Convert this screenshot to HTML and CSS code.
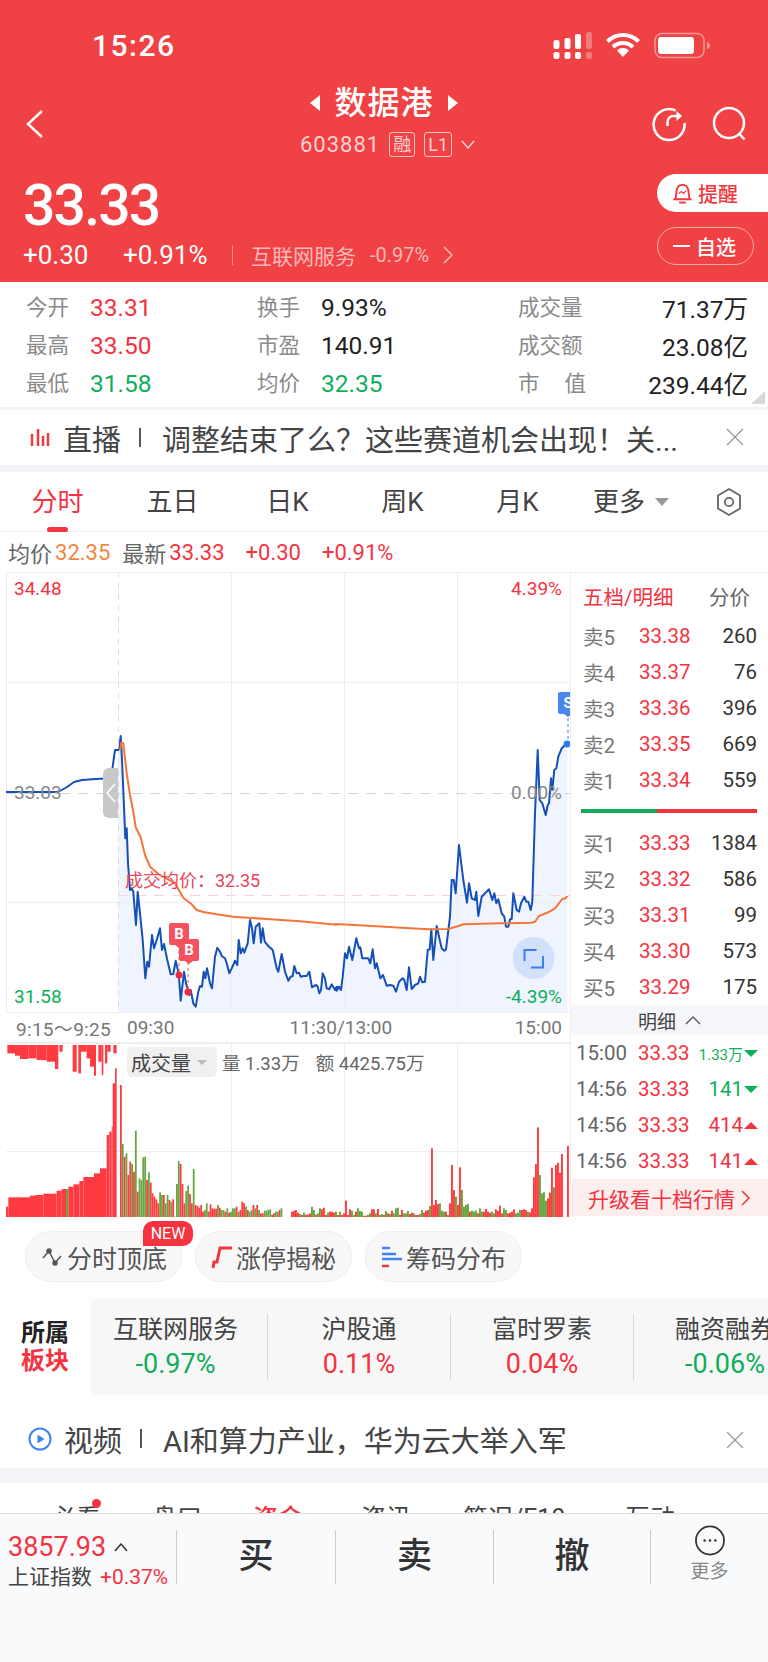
FILE: index.html
```html
<!DOCTYPE html>
<html lang="zh-CN">
<head>
    <meta charset="UTF-8">
    <meta name="viewport" content="width=device-width, initial-scale=1.0">
    <title>数据港 603881</title>
    <link rel="stylesheet" href="styles.css">
</head>
<body>
    <div class="page">
        <header class="top">
            <div class="status">
                <span class="clock">15:26</span>
                <svg class="status-icons" viewBox="550 28 162 34" width="162" height="34">
                    <g fill="#fff">
                        <rect x="553.5" y="40" width="6" height="9" rx="2"/>
                        <rect x="564.5" y="38" width="6" height="11" rx="2"/>
                        <rect x="575" y="34" width="6" height="15" rx="2"/>
                        <rect x="586" y="32" width="6" height="17" rx="2" fill-opacity=".3"/>
                        <rect x="553.5" y="52" width="6" height="7" rx="2"/>
                        <rect x="564.5" y="52" width="6" height="7" rx="2"/>
                        <rect x="575" y="52" width="6" height="7" rx="2"/>
                        <rect x="586" y="52" width="6" height="7" rx="2" fill-opacity=".3"/>
                        <path d="M623 57l-6-6.5a8.5 8.5 0 0 1 12 0z"/>
                    </g>
                    <g fill="none" stroke="#fff" stroke-width="4">
                        <path d="M607.5 41.5a22 22 0 0 1 31 0"/>
                        <path d="M613 47a14.5 14.5 0 0 1 20 0"/>
                    </g>
                    <rect x="655" y="33.500" width="49" height="24" rx="7" fill="none" stroke="#fff" stroke-opacity=".45" stroke-width="1.500"/>
                    <rect x="658" y="37" width="36" height="17" rx="3" fill="#fff"/>
                    <path d="M707 42c2 .5 3 2 3 3.500s-1 3-3 3.500z" fill="#fff" fill-opacity=".5"/>
                </svg>
            </div>
            <nav class="nav">
                <svg class="back" viewBox="0 0 20 32" width="20" height="32"><path d="M17 3L3 16l14 13" fill="none" stroke="#fff" stroke-width="2.500"/></svg>
                <div class="nav-title">
                    <div class="name-row">
                        <span class="arrow-left"></span>
                        <h1>数据港</h1>
                        <span class="arrow-right"></span>
                    </div>
                    <div class="code-row">
                        <span>603881</span>
                        <span class="code-tag">融</span>
                        <span class="code-tag">L1</span>
                        <svg viewBox="0 0 14 9" width="14" height="9"><path d="M1 1l6 7 6-7" fill="none" stroke="#fbd0d0" stroke-width="1.500"/></svg>
                    </div>
                </div>
                <div class="nav-actions">
                    <svg viewBox="0 0 36 36" width="36" height="36" fill="none" stroke="#fff" stroke-width="2.500">
                        <path d="M24.500 4.500A15.500 15.500 0 1 0 33.500 17"/>
                        <path d="M16.500 20v-3.500c0-4 2.500-6.500 6-6.500h7"/>
                        <path d="M25.500 5l5.500 5-5.500 5" fill="#fff" stroke="none"/>
                    </svg>
                    <svg viewBox="0 0 36 36" width="36" height="36" fill="none" stroke="#fff" stroke-width="2.500">
                        <circle cx="17" cy="17" r="15"/>
                        <path d="M27.500 28l5 5.500"/>
                    </svg>
                </div>
            </nav>
            <div class="quote">
                <div class="quote-left">
                    <div class="last-price">33.33</div>
                    <div class="change-row">
                        <span class="change">+0.30</span>
                        <span class="change-pct">+0.91%</span>
                        <i class="change-sep"></i>
                        <span class="sector">互联网服务</span>
                        <span class="sector-pct">-0.97%</span>
                        <svg viewBox="0 0 10 18" width="10" height="18"><path d="M1 1l8 8-8 8" fill="none" stroke="#f9bcbc" stroke-width="1.500"/></svg>
                    </div>
                </div>
                <div class="quote-btns">
                    <div class="btn-remind">
                        <svg viewBox="0 0 22 24" width="21" height="23" fill="none" stroke="#f0383f" stroke-width="2">
                            <path d="M3 18c2-2 1-6 2-10 .8-3 3-5 6-5s5.200 2 6 5c1 4 0 8 2 10z"/>
                            <path d="M7.500 21.500h7"/>
                            <path d="M7 12l3-2 2 2 3-3" stroke-width="1.200"/>
                        </svg>
                        <span>提醒</span>
                    </div>
                    <div class="btn-watch"><i></i><span>自选</span></div>
                </div>
            </div>
        </header>

        <section class="stats">
            <div class="stat"><span class="stat-label">今开</span><span class="red">33.31</span></div>
            <div class="stat"><span class="stat-label">换手</span><span>9.93%</span></div>
            <div class="stat stat-end"><span class="stat-label">成交量</span><span>71.37万</span></div>
            <div class="stat"><span class="stat-label">最高</span><span class="red">33.50</span></div>
            <div class="stat"><span class="stat-label">市盈</span><span>140.91</span></div>
            <div class="stat stat-end"><span class="stat-label">成交额</span><span>23.08亿</span></div>
            <div class="stat"><span class="stat-label">最低</span><span class="green">31.58</span></div>
            <div class="stat"><span class="stat-label">均价</span><span class="green">32.35</span></div>
            <div class="stat stat-end"><span class="stat-label label-wide"><b>市</b><b>值</b></span><span>239.44亿</span></div>
            <i class="stats-corner"></i>
        </section>

        <section class="notice notice-live">
            <svg class="notice-icon" viewBox="0 0 20 20" width="20" height="20"><path d="M2 6v12M8 1v17M13 8v10M18 5v13" stroke="#f0383f" stroke-width="2.500" fill="none"/></svg>
            <span class="notice-kind">直播</span>
            <i class="notice-bar"></i>
            <span class="notice-text">调整结束了么？这些赛道机会出现！关...</span>
            <svg class="notice-close" viewBox="0 0 18 18" width="18" height="18"><path d="M1 1l16 16M17 1L1 17" stroke="#999" stroke-width="1.300"/></svg>
        </section>

        <div class="tabs">
            <span class="tab tab-on">分时</span>
            <span class="tab">五日</span>
            <span class="tab">日K</span>
            <span class="tab">周K</span>
            <span class="tab">月K</span>
            <span class="tab tab-more">更多<i></i></span>
            <svg class="tab-gear" viewBox="0 0 26 30" width="26" height="30" fill="none" stroke="#666" stroke-width="1.800">
                <path d="M13 2l11 6.500v13L13 28 2 21.500v-13z"/>
                <circle cx="13" cy="15" r="4.200"/>
            </svg>
        </div>

        <div class="summary">
            <span class="grey-text">均价</span><span class="orange">32.35</span>
            <span class="grey-text gap-left">最新</span><span class="red">33.33</span>
            <span class="red gap-wide">+0.30</span>
            <span class="red gap-wide">+0.91%</span>
        </div>

        <section class="market">
            <div class="charts">
                <div class="price-chart">
                    <svg class="chart-svg" viewBox="6 572 564 440">
                        <polygon id="priceArea" fill="#eff4fe"/>
                        <g stroke="#eeeeee" stroke-width="1" fill="none">
                            <path d="M6 682.500H570M6 902.500H570M231.500 572V1012M344.500 572V1012M457.500 572V1012"/>
                        </g>
                        <path d="M118.500 572V1012" stroke="#dddddd" stroke-dasharray="6 5"/>
                        <path d="M6 793.500H570" stroke="#c9d8e8" stroke-dasharray="10 8"/>
                        <path d="M118 895.500H570" stroke="#fbd3d6" stroke-dasharray="10 8"/>
                        <polyline id="priceLine" fill="none" stroke="#1450b8" stroke-width="2" stroke-linejoin="round"/>
                        <polyline id="avgLine" fill="none" stroke="#f6763a" stroke-width="2" stroke-linejoin="round"/>
                        <path d="M179 945V975M188 962V992" stroke="#f0525e" stroke-dasharray="3 3"/>
                        <path d="M568 712V744" stroke="#3f82f2" stroke-dasharray="3 3"/>
                        <circle cx="179" cy="975" r="3.500" fill="#f5293a"/>
                        <circle cx="188" cy="992" r="3.500" fill="#f5293a"/>
                        <circle cx="567" cy="744" r="3.500" fill="#2f7bf5"/>
                        <circle cx="533.500" cy="958" r="21" fill="#d2e1fb"/>
                        <path d="M524.500 961V950H536.500M543 956V967.500H531" fill="none" stroke="#3c7df0" stroke-width="2"/>
                    </svg>
                    <span class="axis-label axis-tl red">34.48</span>
                    <span class="axis-label axis-tr red">4.39%</span>
                    <span class="axis-label axis-ml">33.03</span>
                    <span class="axis-label axis-mr">0.00%</span>
                    <span class="axis-label axis-bl green">31.58</span>
                    <span class="axis-label axis-br green">-4.39%</span>
                    <span class="avg-tag">成交均价：32.35</span>
                    <span class="trade-mark mark-b1">B</span>
                    <span class="trade-mark mark-b2">B</span>
                    <span class="trade-mark mark-s">S</span>
                    <span class="chart-handle">
                        <svg viewBox="0 0 10 20" width="10" height="20"><path d="M9 1L1 10l8 9" fill="none" stroke="#fff" stroke-width="1.500"/></svg>
                    </span>
                </div>
                <div class="time-axis">
                    <span class="time-pre">9:15～9:25</span>
                    <span>09:30</span>
                    <span class="time-mid">11:30/13:00</span>
                    <span>15:00</span>
                </div>
                <div class="volume-chart">
                    <svg class="chart-svg" viewBox="6 1044 564 173">
                        <g stroke="#eeeeee" stroke-width="1" fill="none">
                            <path d="M6 1151.500H570M231.500 1044V1217M344.500 1044V1217M457.500 1044V1217"/>
                        </g>
                        <g id="volumeBars"></g>
                    </svg>
                    <div class="volume-info">
                        <span class="volume-tag">成交量<i></i></span>
                        <span>量 1.33万</span>
                        <span class="volume-amount">额 4425.75万</span>
                    </div>
                </div>
            </div>

            <aside class="book">
                <div class="book-head"><span class="red">五档/明细</span><span class="grey-text">分价</span></div>
                <div class="book-row"><span class="book-side">卖5</span><span class="red">33.38</span><span>260</span></div>
                <div class="book-row"><span class="book-side">卖4</span><span class="red">33.37</span><span>76</span></div>
                <div class="book-row"><span class="book-side">卖3</span><span class="red">33.36</span><span>396</span></div>
                <div class="book-row"><span class="book-side">卖2</span><span class="red">33.35</span><span>669</span></div>
                <div class="book-row"><span class="book-side">卖1</span><span class="red">33.34</span><span>559</span></div>
                <div class="book-ratio"><i></i></div>
                <div class="book-row"><span class="book-side">买1</span><span class="red">33.33</span><span>1384</span></div>
                <div class="book-row"><span class="book-side">买2</span><span class="red">33.32</span><span>586</span></div>
                <div class="book-row"><span class="book-side">买3</span><span class="red">33.31</span><span>99</span></div>
                <div class="book-row"><span class="book-side">买4</span><span class="red">33.30</span><span>573</span></div>
                <div class="book-row"><span class="book-side">买5</span><span class="red">33.29</span><span>175</span></div>
                <div class="book-band">明细
                    <svg viewBox="0 0 16 9" width="16" height="9"><path d="M1 8l7-7 7 7" fill="none" stroke="#555" stroke-width="1.300"/></svg>
                </div>
                <div class="tick-row"><span class="tick-time">15:00</span><span class="red">33.33</span><span class="tick-qty green tick-small">1.33万<i class="tri-down"></i></span></div>
                <div class="tick-row"><span class="tick-time">14:56</span><span class="red">33.33</span><span class="tick-qty green">141<i class="tri-down"></i></span></div>
                <div class="tick-row"><span class="tick-time">14:56</span><span class="red">33.33</span><span class="tick-qty red">414<i class="tri-up"></i></span></div>
                <div class="tick-row"><span class="tick-time">14:56</span><span class="red">33.33</span><span class="tick-qty red">141<i class="tri-up"></i></span></div>
                <div class="book-upgrade">升级看十档行情
                    <svg viewBox="0 0 10 16" width="10" height="16"><path d="M1 1l7 7-7 7" fill="none" stroke="#f0383f" stroke-width="1.500"/></svg>
                </div>
            </aside>
        </section>

        <div class="tools">
            <div class="tool">
                <svg viewBox="0 0 24 20" width="24" height="20" fill="none" stroke="#555" stroke-width="1.500">
                    <path d="M3 11l6-7 6 12 6-7"/>
                    <circle cx="9" cy="4" r="2" fill="#555"/><circle cx="15" cy="16" r="2" fill="#555"/>
                </svg>
                <span>分时顶底</span>
                <em class="tool-new">NEW</em>
            </div>
            <div class="tool">
                <svg viewBox="0 0 22 26" width="22" height="26" fill="none" stroke="#f0383f" stroke-width="3">
                    <path d="M2 24l1-6h3l3-14h12"/>
                </svg>
                <span>涨停揭秘</span>
            </div>
            <div class="tool">
                <svg viewBox="0 0 22 24" width="22" height="24" fill="none" stroke-width="2.500">
                    <path d="M1 3h8M1 9h14" stroke="#3f82f2"/>
                    <path d="M1 14h20" stroke="#3f82f2"/>
                    <path d="M1 21h7" stroke="#f0383f"/>
                </svg>
                <span>筹码分布</span>
            </div>
        </div>

        <section class="sectors">
            <div class="sectors-title"><b>所属</b><b class="red">板块</b></div>
            <div class="sectors-list">
                <div class="sector-item"><span>互联网服务</span><span class="green sector-num">-0.97%</span></div>
                <div class="sector-item"><span>沪股通</span><span class="red sector-num">0.11%</span></div>
                <div class="sector-item"><span>富时罗素</span><span class="red sector-num">0.04%</span></div>
                <div class="sector-item"><span>融资融券</span><span class="green sector-num">-0.06%</span></div>
            </div>
        </section>

        <section class="notice notice-video">
            <svg class="notice-icon" viewBox="0 0 24 24" width="24" height="24">
                <circle cx="12" cy="12" r="10.500" fill="none" stroke="#3f82f2" stroke-width="2"/>
                <path d="M9.500 7.500l7 4.500-7 4.500z" fill="#3f82f2"/>
            </svg>
            <span class="notice-kind">视频</span>
            <i class="notice-bar"></i>
            <span class="notice-text">AI和算力产业，华为云大举入军</span>
            <svg class="notice-close" viewBox="0 0 18 18" width="18" height="18"><path d="M1 1l16 16M17 1L1 17" stroke="#999" stroke-width="1.300"/></svg>
        </section>

        <div class="lower-tabs">
            <span class="lower-tab tab-watch">必看</span>
            <span class="lower-tab tab-depth">盘口</span>
            <span class="lower-tab tab-money">资金</span>
            <span class="lower-tab tab-news">资讯</span>
            <span class="lower-tab tab-f10">简况/F10</span>
            <span class="lower-tab tab-talk">互动</span>
        </div>

        <footer class="dock">
            <div class="dock-index">
                <div class="index-price">3857.93
                    <svg viewBox="0 0 14 9" width="14" height="9"><path d="M1 8l6-7 6 7" fill="none" stroke="#333" stroke-width="1.500"/></svg>
                </div>
                <div class="index-name">上证指数<span class="red">+0.37%</span></div>
            </div>
            <div class="dock-btn">买</div>
            <div class="dock-btn">卖</div>
            <div class="dock-btn">撤</div>
            <div class="dock-more">
                <svg viewBox="0 0 32 32" width="32" height="32" fill="#333">
                    <circle cx="16" cy="16" r="14.500" fill="none" stroke="#333" stroke-width="1.800"/>
                    <circle cx="10.500" cy="16" r="1.300"/><circle cx="16" cy="16" r="1.300"/><circle cx="21.500" cy="16" r="1.300"/>
                </svg>
                <span>更多</span>
            </div>
        </footer>
    </div>
    <script src="chart.js"></script>
</body>
</html>
```

FILE: styles.css
```css
* {
    box-sizing: border-box;
}
html, body {
    margin: 0;
    padding: 0;
}
body {
    font-family: Roboto, "Noto Sans CJK SC", sans-serif;
    background-color: #fff;
    color: #222;
}
i, em {
    font-style: normal;
}
.page {
    width: 768px;
    height: 1662px;
    overflow: hidden;
    position: relative;
}
.red {
    color: #f5323f;
}
.green {
    color: #0fae5a;
}
.orange {
    color: #f0853e;
}
.grey-text {
    color: #666;
}

/* header */
.top {
    height: 282px;
    background-color: #f04144;
    color: #fff;
}
.status {
    height: 84px;
    padding: 30px 0 0 92px;
    display: flex;
    justify-content: space-between;
    position: relative;
}
.clock {
    font-size: 30px;
    line-height: 32px;
    font-weight: 500;
    letter-spacing: 1.5px;
}
.status-icons {
    position: absolute;
    left: 550px;
    top: 28px;
}
.nav {
    height: 76px;
    display: grid;
    grid-template-columns: 200px 1fr 200px;
    align-items: end;
}
.back {
    margin: 0 0 20px 25px;
}
.nav-title {
    display: flex;
    flex-direction: column;
    align-items: center;
}
.name-row {
    height: 36px;
    display: flex;
    align-items: center;
    gap: 14px;
    margin-top: 1px;
}
.name-row h1 {
    margin: 0;
    font-size: 32px;
    line-height: 36px;
    font-weight: 500;
    letter-spacing: 1px;
}
.arrow-left, .arrow-right {
    width: 0;
    height: 0;
    border-top: 8px solid transparent;
    border-bottom: 8px solid transparent;
}
.arrow-left {
    border-right: 10px solid #fff;
}
.arrow-right {
    border-left: 10px solid #fff;
}
.code-row {
    height: 39px;
    display: flex;
    align-items: center;
    gap: 9px;
    padding: 8px 0 0 7px;
    font-size: 22px;
    color: #fbd0d0;
    letter-spacing: 1px;
}
.code-tag {
    height: 25px;
    min-width: 26px;
    padding: 0 3px;
    border: 1px solid #fbc4c4;
    border-radius: 3px;
    font-size: 18px;
    line-height: 23px;
    text-align: center;
    letter-spacing: 0;
}
.nav-actions {
    display: flex;
    justify-content: flex-end;
    gap: 25px;
    padding: 0 20px 18px 0;
}
.quote {
    display: flex;
    justify-content: space-between;
}
.quote-left {
    padding: 16px 0 0 23px;
}
.last-price {
    height: 64px;
    font-size: 57px;
    line-height: 60px;
    font-weight: 500;
    letter-spacing: -1.8px;
}
.change-row {
    height: 30px;
    display: flex;
    align-items: center;
}
.change {
    font-size: 26px;
    width: 100px;
}
.change-pct {
    font-size: 26px;
    width: 109px;
}
.change-sep {
    width: 1px;
    height: 20px;
    background-color: #f88;
    margin-right: 18px;
}
.sector {
    width: 119px;
    font-size: 21px;
    color: #fab8b8;
}
.sector-pct {
    width: 73px;
    font-size: 20px;
    color: #fab8b8;
}
.quote-btns {
    width: 111px;
    padding-top: 14px;
    display: flex;
    flex-direction: column;
    gap: 15px;
}
.btn-remind {
    height: 38px;
    background-color: #fff;
    color: #f0383f;
    border-radius: 19px 0 0 19px;
    display: flex;
    align-items: center;
    padding-left: 15px;
    gap: 5px;
    font-size: 20px;
    font-weight: 500;
}
.btn-watch {
    width: 97px;
    height: 38px;
    border: 1px solid #f9a9a9;
    border-radius: 19px;
    display: flex;
    align-items: center;
    padding-left: 15px;
    gap: 6px;
    font-size: 20px;
    font-weight: 500;
}
.btn-watch i {
    width: 17px;
    height: 2px;
    background-color: #fff;
}

/* stats */
.stats {
    height: 128px;
    padding: 6px 20px 0 26px;
    border-bottom: 3px solid #f3f4f8;
    display: grid;
    grid-template-columns: 231px 261px 1fr;
    grid-auto-rows: 38px;
    position: relative;
    font-size: 24.5px;
}
.stat {
    display: flex;
    align-items: center;
    gap: 21px;
}
.stat-end {
    justify-content: space-between;
}
.stat-label {
    font-size: 21.5px;
    color: #8a8a8a;
    margin-top: -4px;
}
.label-wide {
    width: 68px;
    display: flex;
    justify-content: space-between;
}
.label-wide b {
    font-weight: 400;
}
.stats-corner {
    position: absolute;
    right: 3px;
    bottom: 3px;
    width: 0;
    height: 0;
    border-left: 14px solid transparent;
    border-bottom: 13px solid #d8d8d8;
}

/* notices */
.notice {
    display: flex;
    align-items: center;
    color: #444;
    font-size: 29px;
    position: relative;
}
.notice-live {
    height: 62px;
    padding-left: 30px;
    border-bottom: 7px solid #f3f4f8;
}
.notice-icon {
    flex: none;
}
.notice-kind {
    margin-left: 13px;
}
.notice-bar {
    width: 2px;
    height: 19px;
    background-color: #555;
    margin: 0 21px 0 18px;
}
.notice-close {
    position: absolute;
    right: 24px;
}
.notice-live .notice-close {
    top: 18px;
}

/* tabs */
.tabs {
    height: 60px;
    display: grid;
    grid-template-columns: repeat(6, 115px) 1fr;
    align-items: center;
    border-bottom: 1px solid #eee;
    font-size: 26px;
    color: #444;
    position: relative;
}
.tab {
    text-align: center;
    position: relative;
    line-height: 60px;
}
.tab-on {
    color: #f5323f;
}
.tab-on::after {
    content: "";
    position: absolute;
    left: 47px;
    bottom: 0;
    width: 21px;
    height: 5px;
    border-radius: 3px;
    background-color: #f5323f;
}
.tab-more {
    display: flex;
    align-items: center;
    padding-left: 18px;
    gap: 10px;
}
.tab-more i {
    width: 0;
    height: 0;
    border-left: 7px solid transparent;
    border-right: 7px solid transparent;
    border-top: 8px solid #999;
}
.tab-gear {
    justify-self: center;
}
.summary {
    height: 40px;
    padding-left: 8px;
    display: flex;
    align-items: center;
    font-size: 22px;
    gap: 3px;
}
.gap-left {
    margin-left: 9px;
}
.gap-wide {
    margin-left: 18px;
}

/* charts */
.market {
    height: 645px;
    padding-left: 6px;
    display: flex;
}
.charts {
    width: 564px;
    border-left: 0;
}
.price-chart {
    height: 440px;
    position: relative;
    overflow: hidden;
    border-top: 1px solid #eee;
    box-shadow: inset 1px 0 #eee;
}
.chart-svg {
    position: absolute;
    left: 0;
    top: 0;
    width: 564px;
    height: 100%;
}
.price-chart .chart-svg {
    top: -1px;
    height: 440px;
}
.axis-label {
    position: absolute;
    font-size: 19px;
    line-height: 22px;
}
.axis-tl { left: 8px; top: 5px; }
.axis-tr { right: 8px; top: 5px; }
.axis-ml { left: 8px; top: 209px; color: #888; }
.axis-mr { right: 8px; top: 209px; color: #888; }
.axis-bl { left: 8px; top: 413px; }
.axis-br { right: 8px; top: 413px; }
.avg-tag {
    position: absolute;
    left: 119px;
    top: 296px;
    font-size: 18px;
    line-height: 24px;
    color: #e5485a;
}
.trade-mark {
    position: absolute;
    width: 20px;
    height: 22px;
    background-color: #f4525f;
    color: #fff;
    border-radius: 2px;
    font-size: 15px;
    font-weight: 700;
    line-height: 22px;
    text-align: center;
}
.trade-mark::after {
    content: "";
    position: absolute;
    left: 6px;
    bottom: -3px;
    width: 0;
    height: 0;
    border-left: 4px solid transparent;
    border-right: 4px solid transparent;
    border-top: 3px solid #f4525f;
}
.mark-b1 { left: 163px; top: 350px; }
.mark-b2 { left: 173px; top: 366px; }
.mark-s {
    left: 552px;
    top: 119px;
    background-color: #4a86f0;
}
.mark-s::after {
    border-top-color: #4a86f0;
}
.chart-handle {
    position: absolute;
    left: 97px;
    top: 195px;
    width: 15px;
    height: 50px;
    background-color: #c8c8c8;
    border-radius: 6px 0 0 6px;
    display: flex;
    align-items: center;
    justify-content: center;
}
.time-axis {
    height: 32px;
    padding: 0 8px 0 10px;
    display: grid;
    grid-template-columns: 111px 110px 1fr auto;
    align-items: center;
    border-top: 1px solid #eee;
    border-bottom: 2px solid #eee;
    font-size: 19px;
    color: #777;
    box-shadow: inset -4px 0 0 #fff;
}
.time-mid {
    text-align: center;
    padding-right: 70px;
}
.time-pre {
    white-space: nowrap;
    letter-spacing: .3px;
}
.volume-chart {
    height: 173px;
    position: relative;
}
.volume-info {
    position: absolute;
    left: 121px;
    top: 3px;
    display: flex;
    align-items: center;
    font-size: 18.5px;
    color: #666;
    gap: 5px;
}
.volume-tag {
    width: 90px;
    height: 30px;
    background-color: #f0f0f0;
    border-radius: 5px;
    display: flex;
    align-items: center;
    padding-left: 4px;
    gap: 6px;
    font-size: 20px;
    color: #444;
}
.volume-tag i {
    width: 0;
    height: 0;
    border-left: 5px solid transparent;
    border-right: 5px solid transparent;
    border-top: 5px solid #bbb;
}
.volume-amount {
    margin-left: 11px;
}

/* order book */
.book {
    width: 198px;
    border-left: 1px solid #eee;
    border-top: 1px solid #eee;
    font-size: 20.5px;
}
.book-head {
    height: 45px;
    padding: 0 18px 0 12px;
    display: flex;
    justify-content: space-between;
    align-items: center;
    font-size: 20.5px;
}
.book-row, .tick-row {
    height: 36px;
    display: grid;
    align-items: center;
    color: #333;
}
.book-row {
    grid-template-columns: 56px 68px 50px;
    padding-left: 12px;
}
.book-row span:last-child {
    text-align: right;
}
.book-side {
    color: #777;
}
.book-ratio {
    height: 9px;
    margin: 8px 11px 10px 10px;
    padding-top: 0;
    display: flex;
    align-items: center;
    background: linear-gradient(#f5323f, #f5323f) center / 100% 4px no-repeat;
    border-radius: 2px;
}
.book-ratio i {
    width: 76px;
    height: 4px;
    background-color: #0fae5a;
    border-radius: 2px 0 0 2px;
}
.book-band {
    height: 30px;
    background-color: #f5f6f9;
    display: flex;
    align-items: center;
    justify-content: center;
    gap: 9px;
    font-size: 19px;
    color: #444;
}
.tick-row {
    grid-template-columns: 62px 54px 1fr;
    padding: 0 10px 0 5px;
}
.tick-time {
    color: #666;
    white-space: nowrap;
}
.tick-qty {
    display: flex;
    align-items: center;
    justify-content: flex-end;
    gap: 1px;
}
.tick-small {
    font-size: 15px;
}
.tri-down, .tri-up {
    width: 0;
    height: 0;
    border-left: 7px solid transparent;
    border-right: 7px solid transparent;
}
.tri-down {
    border-top: 7px solid #0fae5a;
}
.tri-up {
    border-bottom: 7px solid #f5323f;
}
.book-upgrade {
    height: 37px;
    background-color: #fdeeee;
    color: #f5323f;
    display: flex;
    align-items: center;
    justify-content: center;
    gap: 6px;
    font-size: 21px;
}

/* tool pills */
.tools {
    height: 81px;
    padding: 14px 0 0 25px;
    display: flex;
    gap: 13px;
}
.tool {
    width: 157px;
    height: 51px;
    border: 1px solid #eee;
    border-radius: 26px;
    background-color: #f8f8f8;
    display: flex;
    align-items: center;
    justify-content: center;
    gap: 3px;
    font-size: 25px;
    color: #555;
    position: relative;
}
.tool-new {
    position: absolute;
    left: 117px;
    top: -11px;
    width: 50px;
    height: 25px;
    background-color: #f5323f;
    color: #fff;
    border-radius: 10px 10px 10px 0;
    font-size: 16px;
    line-height: 25px;
    text-align: center;
}

/* sectors */
.sectors {
    height: 97px;
    display: flex;
}
.sectors-title {
    width: 90px;
    display: flex;
    flex-direction: column;
    justify-content: center;
    padding-left: 21px;
    font-size: 24px;
    line-height: 28px;
}
.sectors-list {
    flex: 1;
    background-color: #f7f7f7;
    border-radius: 8px 0 0 8px;
    display: grid;
    grid-template-columns: 178px 183px 183px 1fr;
    align-items: center;
    overflow: hidden;
}
.sector-item {
    height: 66px;
    display: flex;
    flex-direction: column;
    align-items: center;
    justify-content: space-between;
    border-right: 1px solid #d8d8d8;
    font-size: 25px;
    line-height: 32px;
    color: #444;
    white-space: nowrap;
}
.sector-item:first-child {
    padding-right: 6px;
}
.sector-item:last-child {
    border-right: 0;
    width: 100px;
    margin-left: 41px;
}
.sector-num {
    font-size: 27px;
}

.notice-video {
    height: 73px;
    padding: 14px 0 0 28px;
}
.notice-video .notice-kind {
    margin-left: 12px;
}
.notice-video .notice-close {
    top: 36px;
}

/* tabs clipped by the dock */
.lower-tabs {
    height: 45px;
    margin-top: 0;
    border-top: 15px solid #f3f4f8;
    position: relative;
    overflow: hidden;
    font-size: 25px;
    color: #444;
}
.lower-tab {
    position: absolute;
    top: 21px;
    line-height: 30px;
    white-space: nowrap;
}
.tab-watch { left: 51px; }
.tab-watch::after {
    content: "";
    position: absolute;
    left: 41px;
    top: -5px;
    width: 9px;
    height: 9px;
    border-radius: 50%;
    background-color: #f5323f;
}
.tab-depth { left: 152px; }
.tab-money { left: 253px; color: #f5323f; font-weight: 500; }
.tab-news { left: 361px; }
.tab-f10 { left: 463px; }
.tab-talk { left: 625px; }

/* bottom dock */
.dock {
    height: 149px;
    background-color: #f9fafc;
    border-top: 1px solid #ddd;
    padding-top: 16px;
    display: grid;
    grid-template-columns: 176px 159px 158px 157px 1fr;
    align-items: start;
}
.dock-index {
    height: 54px;
    padding-left: 8px;
    white-space: nowrap;
}
.index-price {
    display: flex;
    align-items: center;
    gap: 8px;
    font-size: 27px;
    line-height: 34px;
    color: #f5323f;
}
.index-name {
    display: flex;
    gap: 8px;
    font-size: 21px;
    line-height: 26px;
    color: #444;
}
.dock-btn {
    height: 54px;
    border-left: 1px solid #ccc;
    text-align: center;
    font-size: 35px;
    line-height: 54px;
    font-weight: 500;
    color: #333;
}
.dock-more {
    height: 54px;
    border-left: 1px solid #ccc;
    display: flex;
    flex-direction: column;
    align-items: center;
    font-size: 19px;
    line-height: 24px;
    color: #888;
    margin-top: 0;
}
.dock-more svg {
    margin-top: -5px;
    margin-bottom: 4px;
}
```

FILE: chart.js
```js
// crops of the intraday line, read off at 3x
const lineLeft = [[0,176],[10,176],[18,163],[33,158],[38,140],[45,90],[55,90],[58,88],[62,48],[66,120],[72,260],[76,355],[80,325],[84,430],[90,510],[95,505],[100,515],[108,615],[113,515],[120,580],[128,660],[136,775],[142,725],[147,740],[156,645],[162,685],[170,660],[180,625],[186,690],[192,672],[202,720],[212,763],[220,762],[227,722],[236,760],[242,842],[252,755],[258,790],[268,825],[272,810],[280,850],[287,860],[295,815],[300,798],[306,800],[311,755],[316,775],[321,745],[330,790],[336,805],[345,710],[352,683],[360,695],[365,708],[375,715],[380,730],[388,760],[400,735],[405,722],[412,735],[416,660],[422,700],[428,685],[433,698],[443,670],[450,600],[456,625],[461,670],[467,620],[478,610],[483,668],[488,625],[494,665],[505,678],[518,690],[530,745],[535,755],[545,702],[555,755],[565,782],[572,770],[578,768],[583,738],[590,760],[597,758],[602,770],[610,768],[620,768],[628,755],[636,802],[642,798],[648,795],[653,800],[658,820],[663,810],[668,760],[675,775],[680,805],[688,808],[695,793],[705,810],[712,800]];
const lineRight = [[0,805],[5,812],[12,800],[18,810],[23,770],[30,700],[36,715],[42,680],[52,720],[64,655],[72,685],[76,682],[82,715],[100,715],[106,730],[113,688],[120,745],[125,730],[136,775],[144,765],[155,797],[165,795],[175,797],[183,815],[192,785],[203,775],[208,780],[215,810],[222,742],[230,807],[240,795],[250,790],[255,770],[262,787],[270,785],[278,690],[284,688],[289,628],[295,720],[305,618],[312,650],[320,685],[328,692],[333,688],[345,590],[350,480],[356,480],[362,520],[372,375],[385,480],[396,548],[402,490],[410,535],[420,540],[424,515],[430,588],[440,530],[450,520],[462,508],[472,540],[478,520],[484,550],[490,538],[500,580],[508,590],[513,620],[520,620],[525,598],[530,597],[535,520],[545,570],[552,575],[558,550],[568,530],[574,545],[580,545],[587,570],[592,545],[600,280],[608,90],[614,240],[622,250],[632,285],[638,255],[642,250],[648,175],[652,210],[658,150],[664,145],[670,110],[680,85],[688,77],[697,74]];
const avgLeft = [[60,90],[64,68],[70,70],[80,160],[90,225],[100,275],[107,322],[122,352],[135,405],[150,440],[175,462],[225,490],[250,533],[275,553],[290,570],[310,576],[350,583],[400,590],[500,597],[600,604],[710,614]];
const avgRight = [[0,612],[100,617],[200,623],[280,628],[340,627],[370,618],[385,613],[500,610],[590,608],[600,605],[612,588],[640,577],[660,565],[682,537],[692,535],[697,528]];
const preOpen = [[6,792],[58,792],[67,787],[74,782],[82,780],[96,779]];

const fromLeft = ([x, y]) => [100 + x / 3, 720 + y / 3];
const fromRight = ([x, y]) => [335 + x / 3, 720 + y / 3];
const toPoints = list => list.map(p => p[0].toFixed(1) + ',' + p[1].toFixed(1)).join(' ');

const price = preOpen.concat(lineLeft.map(fromLeft), lineRight.map(fromRight));
const avg = avgLeft.map(fromLeft).concat(avgRight.map(fromRight));
const afterOpen = price.filter(p => p[0] >= 118.5);
const last = afterOpen[afterOpen.length - 1];

document.getElementById('priceLine').setAttribute('points', toPoints(price));
document.getElementById('avgLine').setAttribute('points', toPoints(avg));
document.getElementById('priceArea').setAttribute('points',
    toPoints([[118.5, afterOpen[0][1]], ...afterOpen, [last[0], 1012], [118.5, 1012]]));

// volume bars: values are bar tops in the 3x crop, negative means green
const BAR_RED = '#ff3a40';
const BAR_GREEN = '#64a63f';
const volumeRoot = document.getElementById('volumeBars');

function addBar(x, y, w, h, color) {
    const bar = document.createElementNS('http://www.w3.org/2000/svg', 'rect');
    bar.setAttribute('x', x.toFixed(2));
    bar.setAttribute('y', y.toFixed(2));
    bar.setAttribute('width', w.toFixed(2));
    bar.setAttribute('height', h.toFixed(2));
    bar.setAttribute('fill', color);
    volumeRoot.appendChild(bar);
}

// auction section, drawn as steps [from, to, top]
const auctionLow = [[18,25,500],[25,90,472],[90,105,467],[105,130,465],[130,170,461],[170,185,452],[185,205,447],[205,220,440],[220,238,433],[238,250,423],[250,282,411],[282,300,400],[300,320,385],[320,328,285],[328,335,275],[335,338,260],[338,345,130],[345,350,85]];
const auctionHigh = [[22,45,35],[45,60,42],[60,85,52],[85,110,50],[110,140,55],[140,165,60],[165,175,82],[178,188,30],[218,230,90],[235,243,95],[243,260,30],[260,270,50],[270,282,75],[282,288,102],[295,305,60],[305,310,100],[315,322,65],[322,332,30],[340,350,35]];

auctionLow.forEach(([a, b, top]) => addBar(a / 3, 1040 + top / 3, (b - a) / 3, (532 - top) / 3, BAR_RED));
auctionHigh.forEach(([a, b, bottom]) => addBar(a / 3, 1045, (b - a) / 3, bottom / 3 - 5 + 1.7, BAR_RED));
addBar(198 / 3, 1040 + 447 / 3, 2, (532 - 447) / 3, BAR_GREEN);

const morning = [135,-312,350,-340,405,365,-372,395,-272,455,-415,-420,-352,-350,420,-397,428,460,470,478,490,-457,-465,465,-490,-465,480,-485,478,530,-432,-363,372,432,490,-453,-437,462,490,-387,495,498,503,495,515,-510,-490,515,493,505,506,506,-495,503,-510,-510,515,-505,518,-515,-505,-505,500,-515,510,485,490,-500,510,-515,-510,495,-505,495,-510,520,520,-512,-512,-510,-508,525,520,-515,-515,510,-505];
const afternoon = [515,512,510,518,-522,525,-518,524,524,520,-500,-510,524,-520,-505,508,503,525,-518,515,515,518,-515,525,-515,525,520,482,525,508,-512,-525,515,-505,-513,-515,527,527,-525,-520,508,508,-520,507,-525,-522,525,-513,520,-522,512,-520,-505,-503,525,510,-520,-520,-513,522,518,-520,525,525,-522,-510,518,512,510,-498,325,495,480,492,-490,-512,-515,515,-525,490,375,450,-470,495,382,-450,-500,-495,-492,515,-512,-515,-512,520,-505,-515,515,507,515,518,-515,-520,508,513,497,520,-505,-510,520,518,515,508,-520,-518,-510,510,508,510,-515,517,505,412,372,262,-405,-460,-457,-482,475,458,383,-442,375,368,398,342,532,532,318];

function drawSession(values, startX, step) {
    values.forEach((value, i) => {
        const top = Math.abs(value);
        addBar(startX + i * step, 1040 + top / 3, step - 0.1, (532 - top) / 3, value < 0 ? BAR_GREEN : BAR_RED);
    });
}
drawSession(morning, 120, 1.867);
drawSession(afternoon, 291, 2);
```
